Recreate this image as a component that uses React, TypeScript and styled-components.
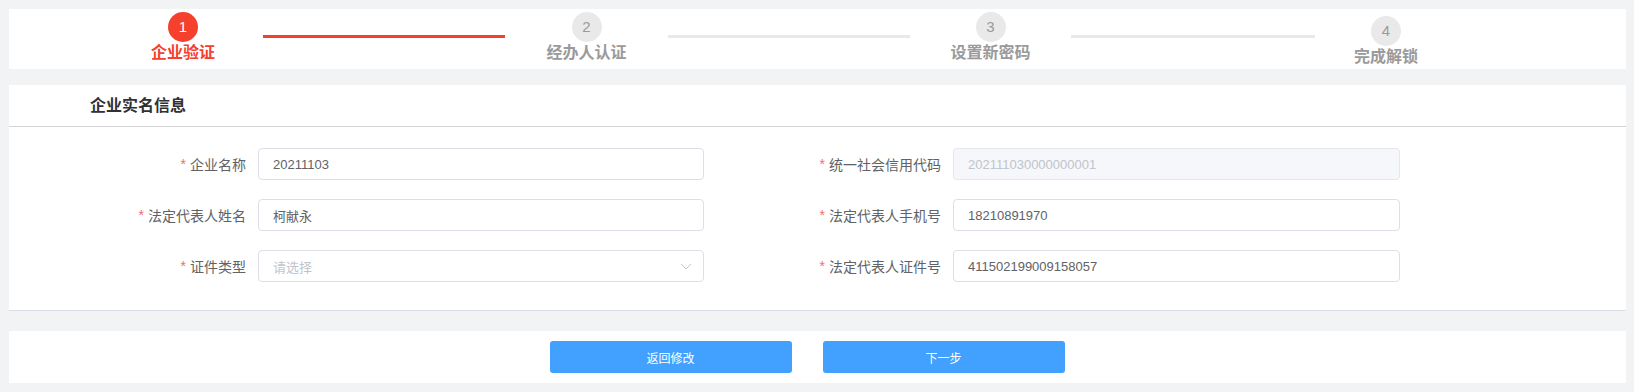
import React from "react";
import styled, { createGlobalStyle } from "styled-components";

const GlobalStyle = createGlobalStyle`
  html, body {
    margin: 0;
    padding: 0;
    background: #f2f3f5;
  }
  body {
    font-family: "Liberation Sans", "Noto Sans CJK SC", sans-serif;
  }
  * { box-sizing: border-box; }
`;

const Page = styled.div`
  background: #f2f3f5;
  padding: 9px 8px 9px 9px;
  display: flex;
  flex-direction: column;
`;

const StepsPanel = styled.div`
  background: #ffffff;
  height: 60px;
  padding: 3px 0 0 94px;
  display: flex;
  align-items: flex-start;
`;

const StepItem = styled.div<{ $w: number; $down?: number }>`
  width: ${(p) => p.$w}px;
  margin-top: ${(p) => p.$down ?? 0}px;
  display: flex;
  flex-direction: column;
  align-items: center;
`;

const Circle = styled.div<{ $active?: boolean }>`
  width: 30px;
  height: 30px;
  border-radius: 50%;
  background: ${(p) => (p.$active ? "#f4402c" : "#e9e9e9")};
  color: ${(p) => (p.$active ? "#ffffff" : "#9a9a9a")};
  font-size: 15px;
  line-height: 30px;
  text-align: center;
`;

const StepLabel = styled.div<{ $active?: boolean }>`
  margin-top: 2px;
  font-size: 16px;
  line-height: 18px;
  font-weight: 700;
  white-space: nowrap;
  color: ${(p) => (p.$active ? "#f4402c" : "#9a9a9a")};
`;

const StepLine = styled.div<{ $w: number; $active?: boolean }>`
  width: ${(p) => p.$w}px;
  height: 3px;
  margin-top: 23px;
  background: ${(p) => (p.$active ? "#f4402c" : "#e9e9e9")};
`;

const FormPanel = styled.div`
  margin-top: 16px;
  background: #ffffff;
  border-bottom: 1px solid #dcdfe6;
`;

const PanelHeader = styled.div`
  height: 42px;
  line-height: 41px;
  padding-left: 81px;
  border-bottom: 1px solid #d3d3d3;
  font-size: 16px;
  font-weight: 700;
  color: #303133;
`;

const FormGrid = styled.div`
  display: grid;
  grid-template-columns: 249px 446px 249px 447px;
  grid-auto-rows: 32px;
  row-gap: 19px;
  padding: 21px 0 28px 0;
`;

const Label = styled.label`
  display: flex;
  align-items: center;
  justify-content: flex-end;
  padding-right: 12px;
  font-size: 14px;
  color: #606266;
  white-space: nowrap;
`;

const Star = styled.span`
  color: #f56c6c;
  margin-right: 4px;
`;

const Field = styled.div<{ $disabled?: boolean }>`
  position: relative;
  height: 32px;
  border: 1px solid ${(p) => (p.$disabled ? "#e4e7ed" : "#dcdfe6")};
  border-radius: 4px;
  background: ${(p) => (p.$disabled ? "#f5f7fa" : "#ffffff")};
  display: flex;
  align-items: center;
  padding: 0 14px;
`;

const FieldText = styled.span<{ $muted?: boolean }>`
  font-size: 13px;
  color: ${(p) => (p.$muted ? "#c0c4cc" : "#606266")};
  white-space: nowrap;
`;

const Chevron = styled.svg`
  position: absolute;
  right: 11px;
  top: 12px;
`;

const ButtonPanel = styled.div`
  margin-top: 20px;
  background: #ffffff;
  height: 52px;
  padding: 10px 21px 10px 0;
  display: flex;
  justify-content: center;
  gap: 31px;
`;

const Button = styled.button`
  width: 242px;
  height: 32px;
  border: none;
  border-radius: 3px;
  background: #42a0ff;
  color: #ffffff;
  font-family: inherit;
  font-size: 12px;
  cursor: pointer;
`;

type Row = { label: string; value: string; muted?: boolean; disabled?: boolean; select?: boolean };

const rows: Row[][] = [
  [
    { label: "企业名称", value: "20211103" },
    { label: "统一社会信用代码", value: "202111030000000001", muted: true, disabled: true },
  ],
  [
    { label: "法定代表人姓名", value: "柯献永" },
    { label: "法定代表人手机号", value: "18210891970" },
  ],
  [
    { label: "证件类型", value: "请选择", muted: true, select: true },
    { label: "法定代表人证件号", value: "411502199009158057" },
  ],
];

export default function App() {
  return (
    <>
      <GlobalStyle />
      <Page>
        <StepsPanel>
          <StepItem $w={160}>
            <Circle $active>1</Circle>
            <StepLabel $active>企业验证</StepLabel>
          </StepItem>
          <StepLine $w={242} $active />
          <StepItem $w={163}>
            <Circle>2</Circle>
            <StepLabel>经办人认证</StepLabel>
          </StepItem>
          <StepLine $w={242} />
          <StepItem $w={161}>
            <Circle>3</Circle>
            <StepLabel>设置新密码</StepLabel>
          </StepItem>
          <StepLine $w={244} />
          <StepItem $w={142} $down={4}>
            <Circle>4</Circle>
            <StepLabel>完成解锁</StepLabel>
          </StepItem>
        </StepsPanel>

        <FormPanel>
          <PanelHeader>企业实名信息</PanelHeader>
          <FormGrid>
            {rows.map((row) =>
              row.map((f) => (
                <React.Fragment key={f.label}>
                  <Label>
                    <Star>*</Star>
                    {f.label}
                  </Label>
                  <Field $disabled={f.disabled}>
                    <FieldText $muted={f.muted}>{f.value}</FieldText>
                    {f.select && (
                      <Chevron width="12" height="7" viewBox="0 0 12 7">
                        <path d="M1 1 L6 6 L11 1" fill="none" stroke="#c0c4cc" strokeWidth="1" />
                      </Chevron>
                    )}
                  </Field>
                </React.Fragment>
              ))
            )}
          </FormGrid>
        </FormPanel>

        <ButtonPanel>
          <Button>返回修改</Button>
          <Button>下一步</Button>
        </ButtonPanel>
      </Page>
    </>
  );
}
